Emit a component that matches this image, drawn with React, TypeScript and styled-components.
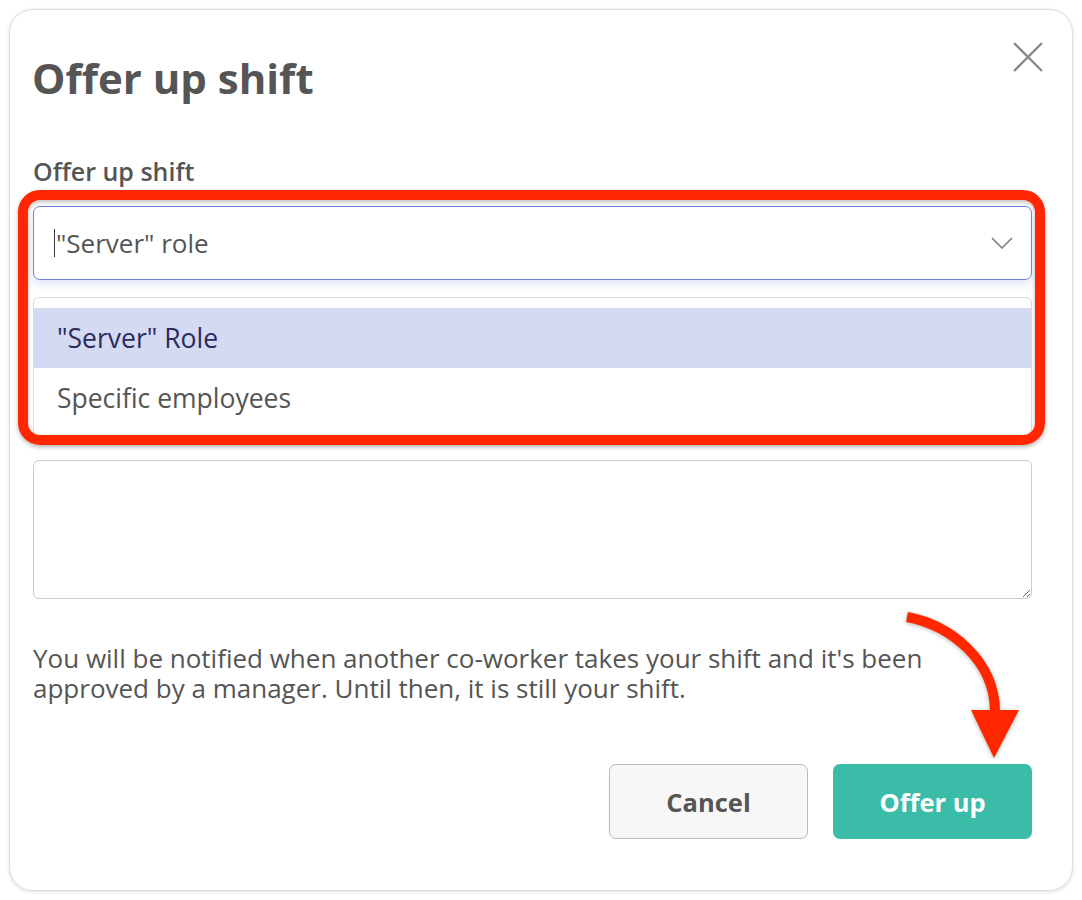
import * as React from "react";
import styled, { createGlobalStyle } from "styled-components";

const GlobalStyle = createGlobalStyle`
  body {
    margin: 0;
    background: #ffffff;
    font-family: "Open Sans", Lato, "Liberation Sans", sans-serif;
    color: #555555;
  }
`;

const options = [
  { label: "\"Server\" Role", active: true },
  { label: "Specific employees", active: false },
];

const App = () => {
  return (
    <>
      <GlobalStyle />
      <Modal>
        <Header>
          <Title>Offer up shift</Title>
          <CloseButton aria-label="Close">
            <svg width="32" height="32" viewBox="0 0 32 32">
              <path d="M2 2 L30 30 M30 2 L2 30" stroke="#8a8a8a" strokeWidth="2.4" />
            </svg>
          </CloseButton>
        </Header>

        <Label>Offer up shift</Label>
        <SelectWrap>
          <SelectBox>
            <Caret />
            <SelectValue>"Server" role</SelectValue>
            <svg width="22" height="12" viewBox="0 0 22 12">
              <path d="M1 1 L11 11 L21 1" fill="none" stroke="#7a7a7a" strokeWidth="1.5" />
            </svg>
          </SelectBox>
          <Menu>
            {options.map((o) => (
              <Option key={o.label} $active={o.active}>
                {o.label}
              </Option>
            ))}
          </Menu>
          <Highlight />
        </SelectWrap>

        <Notes />

        <Info>
          You will be notified when another co-worker takes your shift and it's been
          approved by a manager. Until then, it is still your shift.
        </Info>

        <Footer>
          <Button>Cancel</Button>
          <Button $primary>Offer up</Button>
        </Footer>

        <Arrow width="170" height="180" viewBox="0 0 170 180">
          <path d="M27 17 C70 25 115 60 115 112" fill="none" stroke="#ff2600" strokeWidth="10" />
          <polygon points="91,110 139,110 114,158" fill="#ff2600" />
        </Arrow>
      </Modal>
    </>
  );
};

export default App;

const Modal = styled.div`
  position: relative;
  box-sizing: border-box;
  margin: 9px;
  width: 1064px;
  height: 882px;
  padding: 0 40px 0 23px;
  background: #fff;
  border: 1px solid #dddddd;
  border-radius: 24px;
  box-shadow: 0 1px 4px rgba(0, 0, 0, 0.12);
  display: flex;
  flex-direction: column;
`;

const Header = styled.div`
  display: flex;
  justify-content: space-between;
  align-items: flex-start;
  padding-top: 40px;
`;

const Title = styled.h1`
  margin: 0;
  margin-left: -1px;
  font-size: 42px;
  line-height: 56px;
  font-weight: 700;
  color: #555555;
`;

const CloseButton = styled.button`
  border: 0;
  background: none;
  padding: 0;
  margin: -9px -12px 0 0;
  cursor: pointer;
  display: flex;
`;

const Label = styled.div`
  margin-top: 50px;
  font-size: 25px;
  line-height: 30px;
  font-weight: 600;
  color: #555555;
`;

const SelectWrap = styled.div`
  position: relative;
  margin-top: 20px;
`;

const SelectBox = styled.div`
  box-sizing: border-box;
  height: 74px;
  display: flex;
  align-items: center;
  padding: 0 18px 0 20px;
  border: 1.5px solid #6f86db;
  border-radius: 7px;
  box-shadow: 0 4px 10px rgba(110, 130, 220, 0.22);
  background: #fff;
`;

const Caret = styled.span`
  width: 1px;
  height: 28px;
  margin-right: 1px;
  background: #333;
`;

const SelectValue = styled.span`
  flex: 1;
  font-size: 26px;
  color: #555555;
`;

const Menu = styled.div`
  box-sizing: border-box;
  margin-top: 17px;
  height: 139px;
  padding: 10px 0;
  border: 1px solid #dddddd;
  border-radius: 6px;
  background: #fff;
`;

const Option = styled.div<{ $active?: boolean }>`
  height: 60px;
  display: flex;
  align-items: center;
  padding-left: 23px;
  font-size: 26.5px;
  background: ${(p) => (p.$active ? "#d3daf2" : "transparent")};
  color: ${(p) => (p.$active ? "#2d2a5c" : "#555555")};
`;

const Highlight = styled.div`
  position: absolute;
  top: -16px;
  left: -15px;
  right: -13px;
  bottom: -9px;
  border: 10px solid #ff2600;
  border-radius: 22px;
  box-shadow: 0 2px 4px rgba(0, 0, 0, 0.3), inset 0 2px 4px rgba(0, 0, 0, 0.25);
  pointer-events: none;
`;

const Notes = styled.textarea`
  box-sizing: border-box;
  margin-top: 24px;
  height: 139px;
  width: 100%;
  border: 1.5px solid #cccccc;
  border-radius: 6px;
  font-family: inherit;
  font-size: 22px;
  outline: none;
`;

const Info = styled.p`
  max-width: 960px;
  margin: 44px 0 0;
  font-size: 26px;
  line-height: 30px;
  color: #555555;
`;

const Footer = styled.div`
  display: flex;
  justify-content: flex-end;
  gap: 25px;
  margin-top: 61px;
`;

const Button = styled.button<{ $primary?: boolean }>`
  box-sizing: border-box;
  width: 199px;
  height: 75px;
  border-radius: 7px;
  font-family: inherit;
  font-size: 25.5px;
  font-weight: 700;
  cursor: pointer;
  border: ${(p) => (p.$primary ? "0" : "1.5px solid #bbbbbb")};
  background: ${(p) => (p.$primary ? "#3bbca8" : "#f7f7f7")};
  color: ${(p) => (p.$primary ? "#ffffff" : "#555555")};
`;

const Arrow = styled.svg`
  position: absolute;
  left: 870px;
  top: 590px;
  filter: drop-shadow(0 1px 2px rgba(0, 0, 0, 0.3));
  pointer-events: none;
`;
